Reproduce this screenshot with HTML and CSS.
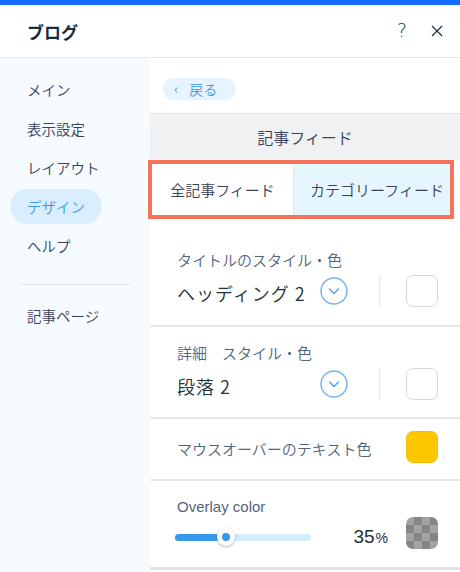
FILE: index.html
```html
<!DOCTYPE html>
<html>
<head>
    <meta charset="UTF-8">
    <title>ブログ</title>
    <link rel="stylesheet" href="styles.css">
</head>
<body>
    <div class="panel">
        <div class="topbar"></div>
        <div class="header">
            <span class="title">ブログ</span>
            <span class="help">?</span>
            <span class="close">
                <svg width="12" height="12" viewBox="0 0 12 12"><path d="M1 1 L11 11 M11 1 L1 11" stroke="#20303c" stroke-width="1.2" fill="none"/></svg>
            </span>
        </div>
        <div class="body">
            <div class="side">
                <a href="javascript:;" class="nav">メイン</a>
                <a href="javascript:;" class="nav">表示設定</a>
                <a href="javascript:;" class="nav">レイアウト</a>
                <a href="javascript:;" class="nav on">デザイン</a>
                <a href="javascript:;" class="nav">ヘルプ</a>
                <div class="side_line"></div>
                <a href="javascript:;" class="nav">記事ページ</a>
            </div>
            <div class="main">
                <div class="back_wrap">
                    <a href="javascript:;" class="back"><span class="lt">‹</span>戻る</a>
                </div>
                <div class="section">記事フィード</div>
                <div class="tabs">
                    <span class="tab">全記事フィード</span>
                    <span class="tab on">カテゴリーフィード</span>
                </div>

                <div class="row row_first">
                    <div class="label">タイトルのスタイル・色</div>
                    <div class="pick">
                        <div class="select">
                            <span class="value">ヘッディング 2</span>
                            <span class="chev">
                                <svg width="28" height="28" viewBox="0 0 28 28"><circle cx="14" cy="14" r="13" stroke="#7cb4ee" stroke-width="1.5" fill="none"/><path d="M9.5 12 L14 16.5 L18.5 12" stroke="#5aa2ec" stroke-width="1.5" fill="none" stroke-linecap="round" stroke-linejoin="round"/></svg>
                            </span>
                        </div>
                        <span class="vline"></span>
                        <span class="swatch"></span>
                    </div>
                </div>

                <div class="row">
                    <div class="label">詳細　スタイル・色</div>
                    <div class="pick">
                        <div class="select">
                            <span class="value">段落 2</span>
                            <span class="chev">
                                <svg width="28" height="28" viewBox="0 0 28 28"><circle cx="14" cy="14" r="13" stroke="#7cb4ee" stroke-width="1.5" fill="none"/><path d="M9.5 12 L14 16.5 L18.5 12" stroke="#5aa2ec" stroke-width="1.5" fill="none" stroke-linecap="round" stroke-linejoin="round"/></svg>
                            </span>
                        </div>
                        <span class="vline"></span>
                        <span class="swatch"></span>
                    </div>
                </div>

                <div class="row row_inline">
                    <span class="label">マウスオーバーのテキスト色</span>
                    <span class="swatch yellow"></span>
                </div>

                <div class="row row_last">
                    <div class="label latin">Overlay color</div>
                    <div class="pick">
                        <div class="slider">
                            <div class="track"><div class="fill" style="width: 51px;"></div></div>
                            <span class="knob" style="left: 51px;"></span>
                        </div>
                        <span class="pct">35<small>%</small></span>
                        <span class="swatch checker"></span>
                    </div>
                </div>
            </div>
        </div>
    </div>
</body>
</html>
```

FILE: styles.css
```css
* {
    margin: 0;
    padding: 0;
    box-sizing: border-box;
}
a {
    text-decoration: none;
}
body {
    font-family: "Noto Sans CJK JP", "Noto Sans", sans-serif;
    font-weight: 350;
    color: #20303c;
    background: #fff;
}
.panel {
    width: 460px;
    height: 572px;
    overflow: hidden;
}
.topbar {
    height: 5px;
    background: #116dff;
}
.header {
    display: flex;
    align-items: center;
    height: 53px;
    padding: 0 17px 0 27px;
    border-bottom: 1px solid #e5e8ec;
}
.header .title {
    flex: 1;
    font-size: 17px;
    font-weight: bold;
    color: #162d3d;
}
.header .help {
    font-family: "DejaVu Sans", sans-serif;
    font-size: 19px;
    font-weight: 200;
    color: #20303c;
    margin-right: 24px;
    margin-top: -2px;
}
.header .close {
    display: flex;
}
.body {
    display: flex;
    height: 514px;
}
.side {
    width: 150px;
    background: #f5fbff;
    padding: 14px 0 0 10px;
    display: flex;
    flex-direction: column;
    align-items: flex-start;
}
.side .nav {
    display: block;
    height: 35px;
    line-height: 35px;
    margin-bottom: 4px;
    padding: 0 17px;
    border-radius: 18px;
    font-size: 14.5px;
    color: #3b4057;
}
.side .nav.on {
    background: #d9eefe;
    color: #3899ec;
}
.side_line {
    width: 111px;
    height: 1px;
    background: #e1e6ea;
    margin: 17px 0 13px 9px;
}
.main {
    flex: 1;
    display: flex;
    flex-direction: column;
}
.back_wrap {
    height: 56px;
    padding: 17px 0 0 13px;
    border-bottom: 1px solid #dfe3e8;
}
.back {
    display: inline-flex;
    align-items: center;
    height: 22px;
    width: 73px;
    padding-left: 11px;
    border-radius: 11px;
    background: #e7f3ff;
    color: #3899ec;
    font-size: 14px;
}
.back .lt {
    font-size: 14px;
    margin-right: 11px;
    margin-top: -2px;
}
.section {
    height: 46px;
    line-height: 46px;
    text-align: center;
    background: #eff1f3;
    font-size: 16px;
    color: #3b4057;
}
.tabs {
    display: flex;
    height: 59px;
    margin: 0 6px 0 -2px;
    border: 4px solid #f6735b;
    background: #fff;
}
.tab {
    display: flex;
    align-items: center;
    justify-content: center;
    width: 141px;
    font-size: 15px;
    color: #3b4057;
}
.tab.on {
    flex: 1;
    padding-left: 10px;
    background: #e6f6ff;
    border-left: 1px solid #d5ebfa;
}
.row {
    padding: 16px 22px 17px 27px;
    border-bottom: 2px solid #e4e8ec;
}
.row_first {
    padding-top: 31px;
    padding-bottom: 18px;
}
.row_inline {
    display: flex;
    align-items: center;
    justify-content: space-between;
    height: 62px;
    padding-top: 0;
    padding-bottom: 0;
}
.row_last {
    height: 89px;
    border-bottom: 3px solid #dde3ea;
}
.label {
    font-size: 15px;
    line-height: 20px;
    color: #52667a;
}
.label.latin {
    font-family: "Liberation Sans", sans-serif;
    font-weight: normal;
}
.pick {
    display: flex;
    align-items: center;
    height: 32px;
    margin-top: 5px;
}
.row_last .pick {
    margin-top: 0;
}
.select {
    display: flex;
    align-items: center;
    justify-content: space-between;
    width: 171px;
}
.select .value {
    font-size: 18px;
    letter-spacing: 1px;
    color: #20303c;
    padding-top: 3px;
    white-space: nowrap;
}
.chev {
    display: flex;
}
.vline {
    width: 1px;
    height: 32px;
    background: #e4e8ec;
    margin: 0 26px 0 31px;
}
.swatch {
    display: block;
    width: 32px;
    height: 32px;
    border-radius: 7px;
    border: 1px solid #d4d8dc;
    background: #fff;
}
.swatch.yellow {
    background: #fec800;
    border-color: #f5c000;
    margin-top: -4px;
}
.swatch.checker {
    border: none;
    background-color: #a3a3a3;
    background-image:
        linear-gradient(45deg, #858585 25%, transparent 25%, transparent 75%, #858585 75%),
        linear-gradient(45deg, #858585 25%, transparent 25%, transparent 75%, #858585 75%);
    background-size: 16px 16px;
    background-position: 0 0, 8px 8px;
}
.slider {
    position: relative;
    width: 136px;
    height: 18px;
    margin: 8px 0 0 -2px;
    display: flex;
    align-items: center;
}
.track {
    width: 100%;
    height: 7px;
    border-radius: 4px;
    background: #d3edff;
    overflow: hidden;
}
.fill {
    height: 100%;
    background: #3899ec;
}
.knob {
    position: absolute;
    top: 0;
    width: 18px;
    height: 18px;
    margin-left: -9px;
    border-radius: 50%;
    background: #fff;
    box-shadow: 0 1px 3px rgba(22, 45, 61, 0.35);
}
.knob::after {
    content: "";
    position: absolute;
    left: 5px;
    top: 5px;
    width: 8px;
    height: 8px;
    border-radius: 50%;
    background: #3899ec;
}
.pct {
    font-family: "Liberation Sans", sans-serif;
    font-weight: normal;
    font-size: 19px;
    color: #20303c;
    margin: 8px 18px 0 auto;
}
.pct small {
    font-size: 14px;
    margin-left: 1px;
}
```
